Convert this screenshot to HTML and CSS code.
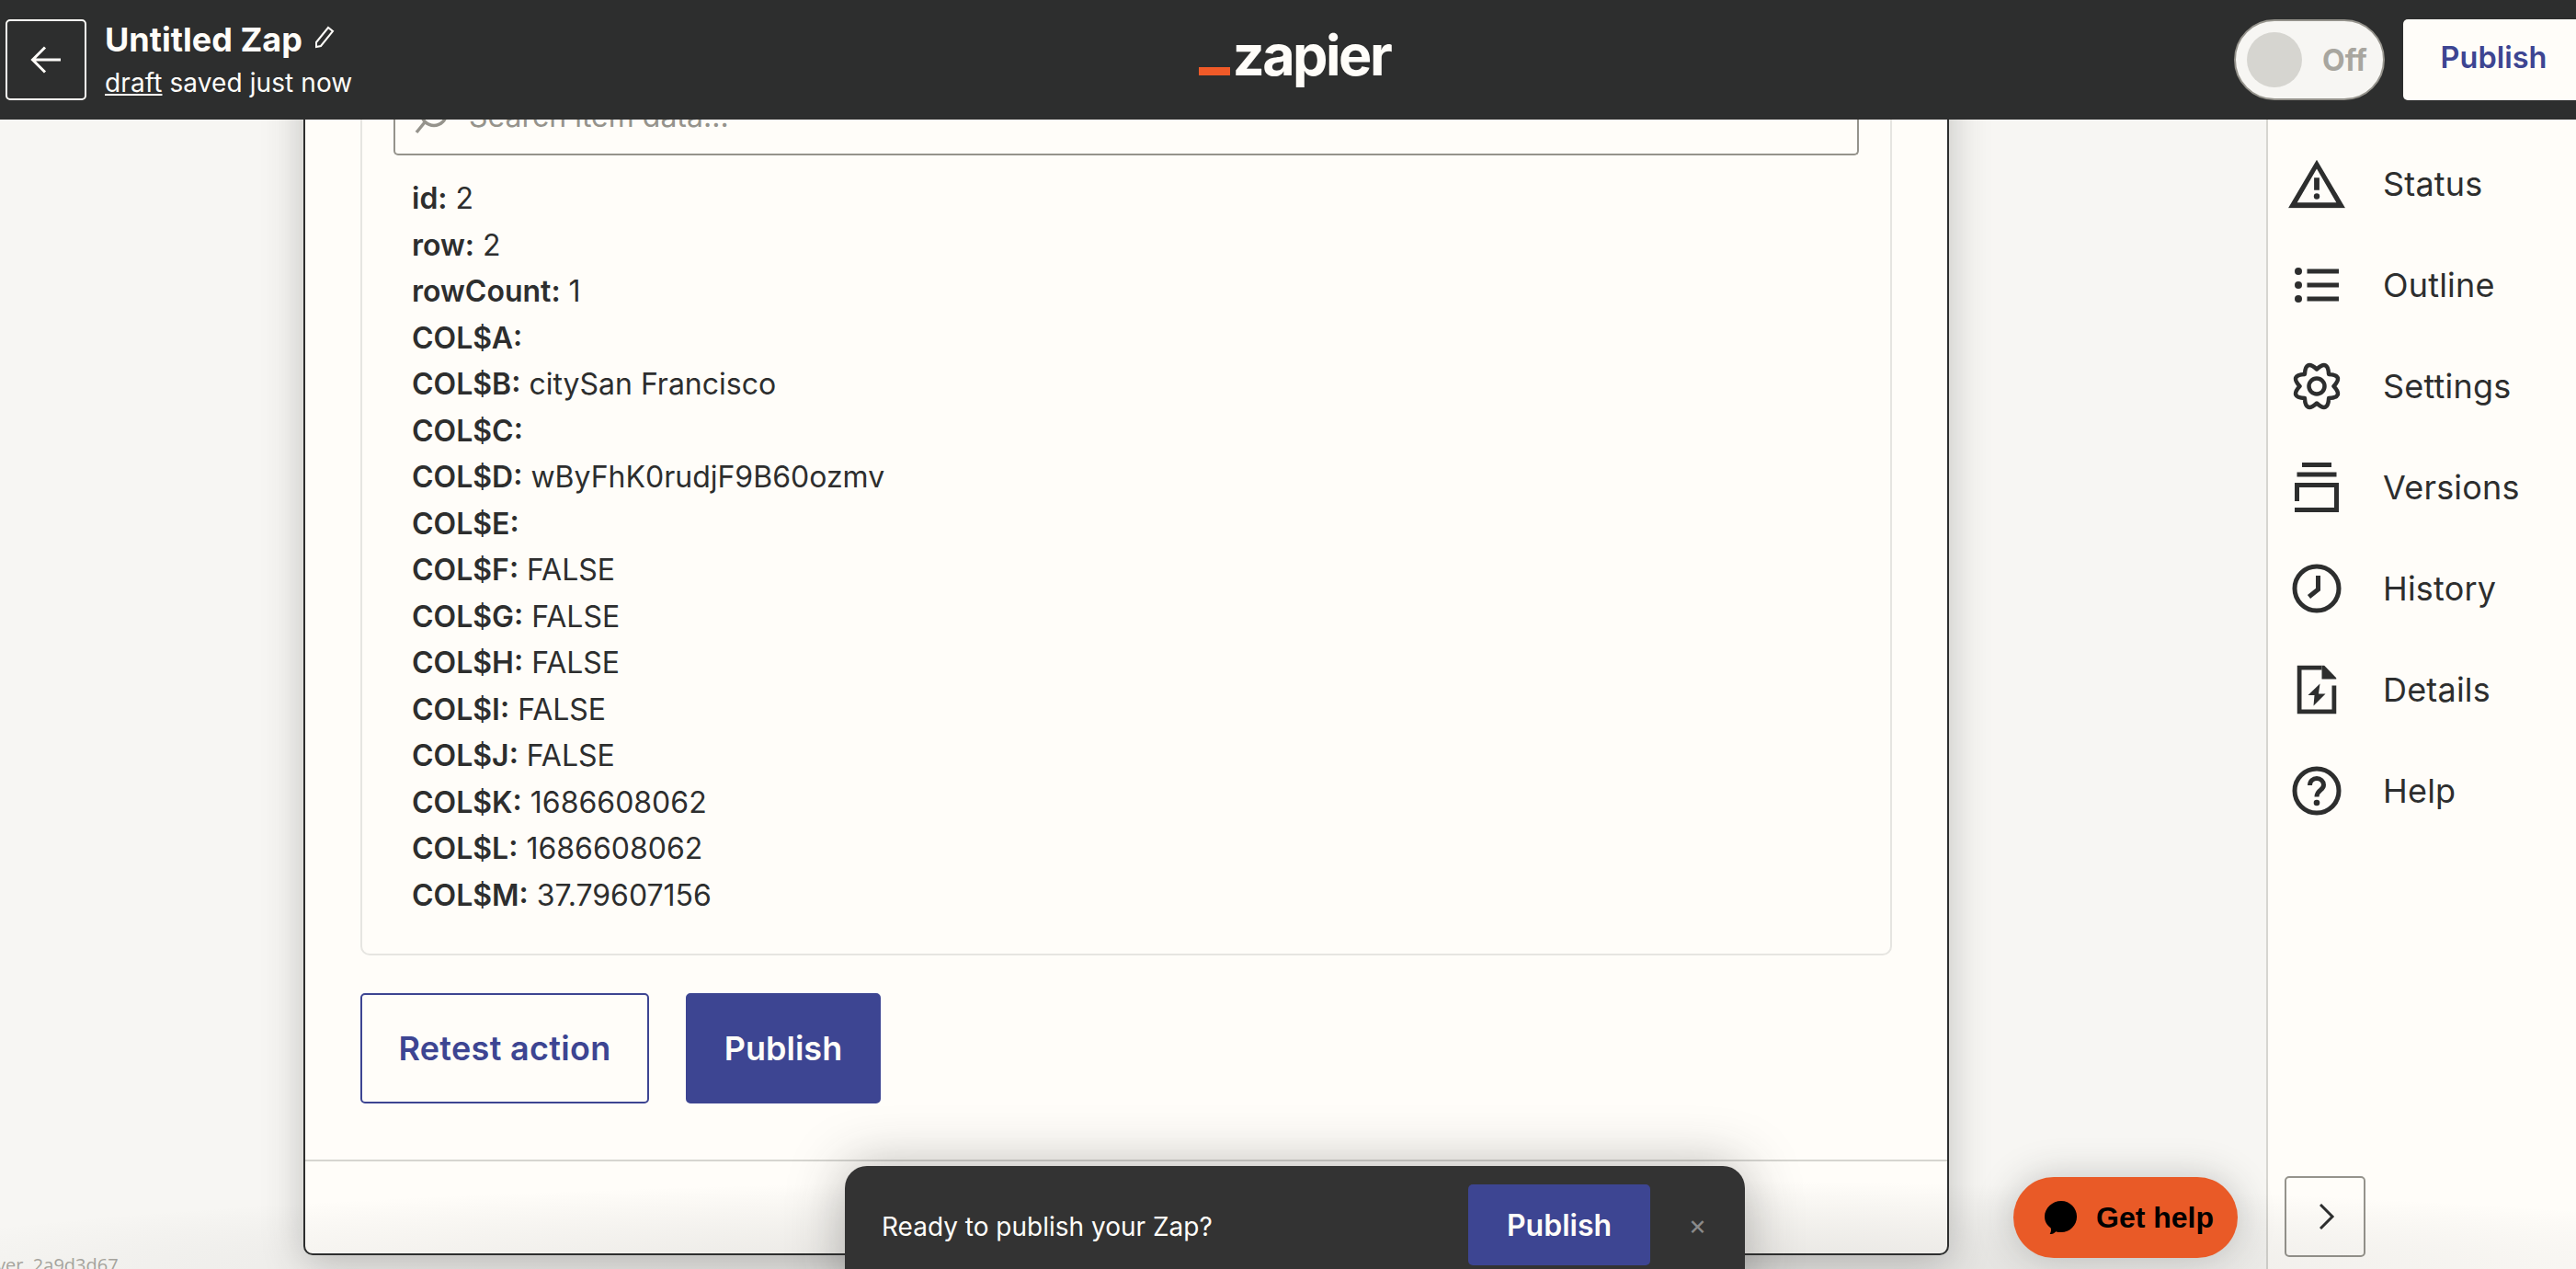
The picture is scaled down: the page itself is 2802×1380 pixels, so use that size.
FILE: index.html
```html
<!DOCTYPE html>
<html lang="en">
<head>
  <meta charset="UTF-8" />
  <meta name="viewport" content="width=device-width, initial-scale=1.0" />
  <title>Untitled Zap</title>
  <link rel="stylesheet" href="styles.css">
</head>
<body>
  <header class="topbar">
    <div class="topbar-left">
      <button class="back-btn">
        <svg width="34" height="30" viewBox="0 0 34 30" fill="none" stroke="#fffdf9" stroke-width="3"><path d="M33 15H3M16 1.500 2.500 15 16 28.500"/></svg>
      </button>
      <div class="zap-title">
        <div class="zap-name">Untitled Zap
          <svg class="pencil" width="24" height="26" viewBox="0 0 24 26" fill="none" stroke="#fffdf9" stroke-width="2"><path d="M2 19 15 3l5 4L7 23l-5 1z"/></svg>
        </div>
        <div class="zap-status"><u>draft</u> saved just now</div>
      </div>
    </div>
    <div class="logo"><span class="logo-dash"></span><span class="logo-text">zapier</span></div>
    <div class="topbar-right">
      <div class="toggle"><span class="toggle-knob"></span><span class="toggle-label">Off</span></div>
      <button class="publish-top">Publish</button>
    </div>
  </header>

  <div class="workspace">
    <main class="canvas">
      <section class="card">
        <div class="card-body">
          <div class="data-panel">
            <div class="search-box">
              <svg class="search-icon" width="44" height="44" viewBox="0 0 44 44" fill="none" stroke="#95938c" stroke-width="3.500"><circle cx="22" cy="21" r="13.500"/><path d="M12 31 3 42"/></svg>
              <span class="search-text">Search item data...</span>
            </div>
            <ul class="data-list">
              <li><b>id:</b> 2</li>
              <li><b>row:</b> 2</li>
              <li><b>rowCount:</b> 1</li>
              <li><b>COL$A:</b></li>
              <li><b>COL$B:</b> citySan Francisco</li>
              <li><b>COL$C:</b></li>
              <li><b>COL$D:</b> wByFhK0rudjF9B60ozmv</li>
              <li><b>COL$E:</b></li>
              <li><b>COL$F:</b> FALSE</li>
              <li><b>COL$G:</b> FALSE</li>
              <li><b>COL$H:</b> FALSE</li>
              <li><b>COL$I:</b> FALSE</li>
              <li><b>COL$J:</b> FALSE</li>
              <li><b>COL$K:</b> 1686608062</li>
              <li><b>COL$L:</b> 1686608062</li>
              <li><b>COL$M:</b> 37.79607156</li>
            </ul>
          </div>
          <div class="actions">
            <button class="btn btn-outline">Retest action</button>
            <button class="btn btn-solid">Publish</button>
          </div>
        </div>
        <div class="card-footer"></div>
      </section>
    </main>

    <aside class="sidebar">
      <nav class="side-nav">
        <a class="side-item">
          <svg width="62" height="53" viewBox="0 0 64 54"><path fill-rule="evenodd" fill="#2d2e2e" d="M32 0 64 54H0zM32 10 10 48h44z"/><path fill="#2d2e2e" d="M29 20h6v14h-6z"/><circle cx="32" cy="41" r="3.300" fill="#2d2e2e"/></svg>
          <span>Status</span>
        </a>
        <a class="side-item">
          <svg width="48" height="38" viewBox="0 0 48 38" fill="#2d2e2e"><circle cx="4" cy="4" r="4"/><circle cx="4" cy="19" r="4"/><circle cx="4" cy="34" r="4"/><path d="M13.500 1.500H48v5H13.500zM13.500 16.500H48v5H13.500zM13.500 31.500H48v5H13.500z"/></svg>
          <span>Outline</span>
        </a>
        <a class="side-item">
          <svg width="54" height="54" viewBox="0 0 54 54" fill="none" stroke="#2d2e2e" stroke-width="4.500" stroke-linejoin="round"><path d="M27 8.500Q39.200-2.600 40.100 13.900 56.600 14.800 45.500 27 56.600 39.200 40.100 40.100 39.200 56.600 27 45.500 14.800 56.600 13.900 40.100-2.600 39.200 8.500 27-2.600 14.800 13.900 13.900 14.800-2.600 27 8.500z"/><circle cx="27" cy="27" r="8.500"/></svg>
          <span>Settings</span>
        </a>
        <a class="side-item">
          <svg width="48" height="54" viewBox="0 0 48 54" fill="#2d2e2e"><path d="M8 0h32v5H8zM2.500 10.500h43v5h-43z"/><path d="M0 22h48v32H0v-5h43V27H5v15H0z"/></svg>
          <span>Versions</span>
        </a>
        <a class="side-item">
          <svg width="54" height="54" viewBox="0 0 54 54" fill="none" stroke="#2d2e2e" stroke-width="5"><circle cx="27" cy="27" r="24"/><path d="M28.500 13v15l-10 8"/></svg>
          <span>History</span>
        </a>
        <a class="side-item">
          <svg width="43" height="53" viewBox="0 0 43 53" fill="#2d2e2e"><path d="M0 0h27v5H5v43h33V22h5v31H0z"/><path d="M27 0h2.500L43 14v1H27z"/><path d="M25 20 12 32.500h7L18 44 31 31h-7.500z"/></svg>
          <span>Details</span>
        </a>
        <a class="side-item">
          <svg width="54" height="54" viewBox="0 0 54 54" fill="none" stroke="#2d2e2e" stroke-width="5"><circle cx="27" cy="27" r="24"/><path d="M19.500 21c0-4.500 3.500-7.500 7.500-7.500s7.500 3 7.500 7c0 6.500-7.500 5-7.500 13"/><circle cx="27" cy="40" r="3.300" fill="#2d2e2e" stroke="none"/></svg>
          <span>Help</span>
        </a>
      </nav>
      <button class="collapse-btn">
        <svg width="17" height="28" viewBox="0 0 17 28" fill="none" stroke="#2d2e2e" stroke-width="3"><path d="M1 1l13 13L1 27"/></svg>
      </button>
    </aside>
  </div>

  <div class="bottom-shade"></div>

  <span class="version">ver. 2a9d3d67</span>

  <div class="toast">
    <span class="toast-text">Ready to publish your Zap?</span>
    <button class="btn btn-solid toast-btn">Publish</button>
    <span class="toast-close">×</span>
  </div>

  <button class="help-btn">
    <svg width="36" height="36" viewBox="0 0 38 38" fill="#000"><path d="M19 0c10 0 18 8 18 18s-8 18-18 18c-2 0-4 0-6-1-2 2-4 3-7 3 1-2 2-4 1-7C3 28 0 24 0 18 0 8 9 0 19 0z"/></svg>
    Get help
  </button>
</body>
</html>
```

FILE: styles.css
```css
* {
  box-sizing: border-box;
}
html, body {
  height: 100%;
}
body {
  margin: 0;
  overflow: hidden;
  background: #f7f6f3;
  color: #2d2e2e;
  font-family: Inter, "Liberation Sans", sans-serif;
  display: flex;
  flex-direction: column;
}
button {
  font-family: inherit;
  cursor: pointer;
}

/* top bar */
.topbar {
  height: 130px;
  flex: none;
  background: #2d2e2e;
  color: #fffdf9;
  display: grid;
  grid-template-columns: 1fr auto 1fr;
  align-items: center;
  position: relative;
  z-index: 2;
}
.topbar-left {
  display: flex;
  align-items: center;
  padding-left: 6px;
  gap: 20px;
}
.back-btn {
  width: 88px;
  height: 88px;
  background: none;
  border: 2px solid #fffdf9;
  border-radius: 5px;
  display: flex;
  align-items: center;
  justify-content: center;
  padding: 0;
}
.zap-name {
  font-size: 36px;
  font-weight: 700;
  line-height: 44px;
  display: flex;
  align-items: center;
  gap: 13px;
}
.pencil {
  margin-bottom: 6px;
}
.zap-status {
  font-size: 28px;
  line-height: 40px;
  margin-top: 5px;
  letter-spacing: 0.1px;
}
.logo {
  display: flex;
  align-items: baseline;
  gap: 3px;
  margin-left: 14px;
  padding-bottom: 10px;
}
.logo-dash {
  width: 34px;
  height: 9px;
  background: #f05a28;
}
.logo-text {
  font-size: 61px;
  font-weight: 700;
  line-height: 64px;
  letter-spacing: -2.500px;
}
.topbar-right {
  display: flex;
  justify-content: flex-end;
  align-items: center;
  gap: 20px;
  margin-right: -32px;
}
.toggle {
  width: 164px;
  height: 88px;
  border-radius: 44px;
  background: #f7f6f3;
  border: 2px solid #95938c;
  display: flex;
  align-items: center;
  padding-left: 12px;
}
.toggle-knob {
  width: 60px;
  height: 60px;
  border-radius: 50%;
  background: #d6d5d0;
}
.toggle-label {
  margin-left: 22px;
  font-size: 32px;
  font-weight: 700;
  color: #a8a69f;
}
.publish-top {
  width: 220px;
  height: 88px;
  border: none;
  border-radius: 5px 0 0 5px;
  background: #fffdf9;
  color: #3d4592;
  font-size: 32.500px;
  font-weight: 600;
  line-height: 84px;
  padding: 0 23px 4px 0;
}

/* main area */
.workspace {
  flex: 1;
  min-height: 0;
  display: flex;
}
.canvas {
  flex: 1;
  overflow: hidden;
  padding-left: 330px;
  padding-right: 345px;
  position: relative;
}
.card {
  width: 1790px;
  height: 1295px;
  margin-top: -60px;
  background: #fffdf9;
  border: 2px solid #2d2e2e;
  border-radius: 10px;
  box-shadow: 0 8px 44px rgba(45, 46, 46, 0.28);
  display: flex;
  flex-direction: column;
}
.card-body {
  flex: none;
  height: 1189px;
  padding: 0 60px;
}
.data-panel {
  height: 967px;
  border: 2px solid #e6e5e1;
  border-top: none;
  border-radius: 0 0 10px 10px;
  padding: 0 34px;
}
.search-box {
  height: 97px;
  border: 2px solid #95938c;
  border-top: none;
  border-radius: 0 0 5px 5px;
  display: flex;
  align-items: flex-end;
  padding: 0 0 20px 20px;
  gap: 16px;
}
.search-icon {
  margin-bottom: 1px;
}
.search-text {
  font-size: 32px;
  color: #95938c;
  line-height: 40px;
}
.data-list {
  list-style: none;
  margin: 22px 0 0;
  padding: 0 0 0 20px;
  font-size: 32px;
  line-height: 50.500px;
}
.data-list b {
  font-weight: 600;
}
.actions {
  display: flex;
  gap: 40px;
  margin-top: 41px;
}
.btn {
  height: 120px;
  border-radius: 5px;
  font-size: 36px;
  font-weight: 600;
  border: 2px solid #3d4592;
}
.btn-outline {
  width: 314px;
  background: #fffdf9;
  color: #3d4592;
  letter-spacing: 0.3px;
}
.btn-solid {
  width: 212px;
  background: #3d4592;
  color: #fffdf9;
}
.card-footer {
  flex: 1;
  border-top: 2px solid #d6d5d0;
}

/* sidebar */
.sidebar {
  width: 337px;
  flex: none;
  background: #fffdf9;
  border-left: 2px solid #d6d5d0;
  padding: 15px 0 0;
  display: flex;
  flex-direction: column;
  position: relative;
}
.side-nav {
  display: flex;
  flex-direction: column;
}
.side-item {
  height: 110px;
  display: flex;
  align-items: center;
  font-size: 36px;
  letter-spacing: 0.2px;
  position: relative;
  padding-left: 125px;
}
.side-item svg {
  position: absolute;
  left: 53px;
  top: 50%;
  transform: translate(-50%, -50%);
}
.collapse-btn {
  position: absolute;
  left: 18px;
  bottom: 13px;
  width: 88px;
  height: 88px;
  background: #fffdf9;
  border: 2px solid #95938c;
  border-radius: 5px;
  display: flex;
  align-items: center;
  justify-content: center;
  padding: 0 0 0 4px;
}

/* overlays */
.bottom-shade {
  position: absolute;
  left: 0;
  right: 0;
  bottom: 0;
  height: 110px;
  background: radial-gradient(ellipse 1700px 100px at 1500px 100%, rgba(45, 46, 46, 0.14), rgba(45, 46, 46, 0));
  pointer-events: none;
  z-index: 1;
}
.version {
  position: absolute;
  left: -4px;
  bottom: -9px;
  font-family: "Open Sans", sans-serif;
  font-size: 20px;
  color: #a8a69f;
}
.toast {
  position: absolute;
  left: 919px;
  top: 1268px;
  width: 979px;
  height: 140px;
  background: #333;
  border-radius: 24px;
  color: #fffdf9;
  display: flex;
  align-items: flex-start;
  padding: 20px 0 0 40px;
  box-shadow: 0 0 60px rgba(45, 46, 46, 0.35);
  z-index: 3;
}
.toast-text {
  font-size: 28px;
  line-height: 40px;
  margin-top: 26px;
}
.toast-btn {
  width: 198px;
  height: 88px;
  margin-left: auto;
  font-size: 32px;
  border: none;
}
.toast-close {
  width: 103px;
  text-align: center;
  font-size: 30px;
  line-height: 88px;
  color: #8a8a8a;
}
.help-btn {
  position: absolute;
  left: 2190px;
  top: 1280px;
  width: 244px;
  height: 88px;
  border: none;
  border-radius: 44px;
  background: #e95a27;
  color: #000;
  font-family: "Liberation Sans", sans-serif;
  font-size: 32px;
  font-weight: 700;
  display: flex;
  align-items: center;
  justify-content: center;
  gap: 20px;
  padding: 0 0 0 8px;
  box-shadow: 0 0 40px rgba(45, 46, 46, 0.25);
  z-index: 3;
}
```
